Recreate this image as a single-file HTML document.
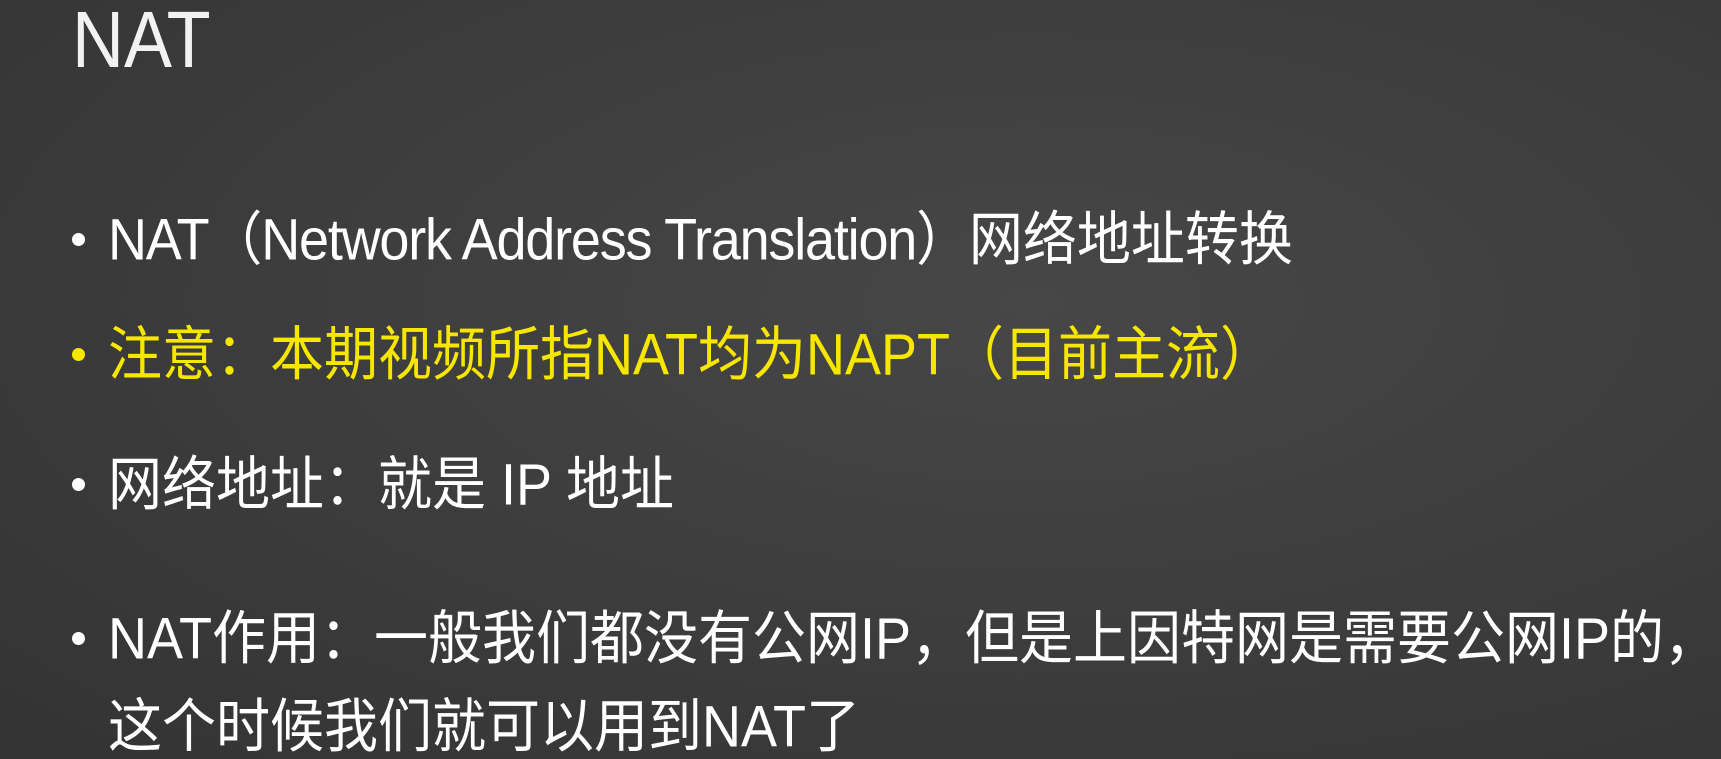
<!DOCTYPE html>
<html><head><meta charset="utf-8"><style>
html,body{margin:0;padding:0}
body{width:1721px;height:759px;overflow:hidden;position:relative;
background:radial-gradient(ellipse at 60% 40%,#474747 0%,#3d3d3d 50%,#333 100%);
font-family:"Liberation Sans","Noto Sans CJK SC",sans-serif;color:#fff}
.t{position:absolute;left:72px;top:-6px;font-size:80px;color:#f2f2f2;transform:scaleX(0.9);transform-origin:left}
.l{position:absolute;left:108px;font-size:54px;white-space:nowrap;line-height:1;transform:scaleY(1.08);transform-origin:left center}
.b{position:absolute;left:72px;width:13px;height:13px;border-radius:50%;background:#fff}
.y{color:#f7e600}
</style></head><body>
<div class="t">NAT</div>
<div class="b" style="top:233px"></div>
<div class="l" style="top:213px"><span style="letter-spacing:-1.2px">NAT（Network Address Translation）</span>网络地址转换</div>
<div class="b" style="top:348px;background:#f7e600"></div>
<div class="l y" style="top:328px">注意：本期视频所指NAT均为NAPT（目前主流）</div>
<div class="b" style="top:478px"></div>
<div class="l" style="top:458px">网络地址：就是 IP 地址</div>
<div class="b" style="top:632px"></div>
<div class="l" style="top:612px">NAT作用：一般我们都没有公网IP，但是上因特网是需要公网IP的，</div>
<div class="l" style="top:700px">这个时候我们就可以用到NAT了</div>
</body></html>
